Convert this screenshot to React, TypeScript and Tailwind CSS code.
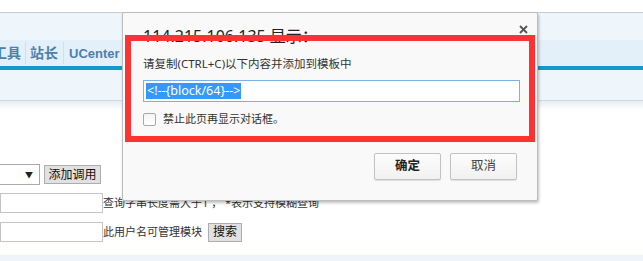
import React from "react";

const cjk = { fontFamily: '"Noto Sans", "Noto Sans CJK SC", sans-serif' };

export default function App() {
  return (
    <div className="relative w-[643px] h-[261px] overflow-hidden bg-white" style={cjk}>
      {/* page background */}
      <div className="h-[12px] bg-white" />
      <div className="h-[28px] border-t border-[#c9cdd1] bg-[#eef5fb]" />
      <div className="h-[26px] bg-[#e3eff9] flex items-center text-[14px] font-bold text-[#4d80ad] leading-none">
        <span className="ml-[-7px]">工具</span>
        <span className="mx-[4px] w-px h-[22px] bg-[#cfdfee]" />
        <span>站长</span>
        <span className="mx-[5px] w-px h-[22px] bg-[#cfdfee]" />
        <span className="text-[13px]" style={{ fontFamily: '"Liberation Sans", sans-serif' }}>UCenter</span>
      </div>
      <div className="h-[4px] bg-[#1398cc]" />
      <div className="h-[31px] bg-[#eef5fb] border-b border-[#d3d9de]" />
      <div className="h-[9px] bg-gradient-to-b from-[#e6edf3] to-white" />

      <div className="mt-[54px] flex flex-col text-[11px] text-[#333]">
        <div className="flex items-center h-[21px]">
          <div className="ml-[-60px] w-[100px] h-[21px] border border-[#a9a9a9] bg-white flex items-center justify-end pr-[6px] text-[8px] text-[#222]">
            ▼
          </div>
          <div className="ml-[4px] w-[57px] h-[19px] border border-[#adadad] bg-[#e1e1e1] flex items-center justify-center text-[12px] text-[#111]">
            添加调用
          </div>
        </div>
        <div className="flex items-center h-[20px] mt-[8px]">
          <div className="w-[103px] h-[20px] border border-[#c4c4c4] bg-white" />
          <span className="whitespace-pre">查询字串长度需大于1 ， *表示支持模糊查询</span>
        </div>
        <div className="flex items-center h-[20px] mt-[9px]">
          <div className="w-[103px] h-[20px] border border-[#c4c4c4] bg-white" />
          <span className="whitespace-nowrap">此用户名可管理模块</span>
          <div className="ml-[6px] w-[34px] h-[19px] border border-[#adadad] bg-[#e1e1e1] flex items-center justify-center text-[12px] text-[#111]">
            搜索
          </div>
        </div>
        <div className="mt-[13px] h-[8px] bg-[#eef4fa]" />
      </div>

      {/* dialog */}
      <div className="absolute left-[122px] top-[12px] w-[416px] h-[189px] bg-[#f9f9f9] border border-[#bdbdbd] rounded-[2px] shadow-[1px_2px_3px_rgba(0,0,0,0.25)] flex flex-col pl-[20px] pr-[20px]">
        <div className="mt-[12px] text-[16px] leading-[22px] text-[#222] whitespace-nowrap">
          114.215.106.135 显示：
        </div>
        <svg className="absolute right-[9px] top-[12px]" width="9" height="9" viewBox="0 0 9 9">
          <path d="M1 1L8 8M8 1L1 8" stroke="#555" strokeWidth="1.8" />
        </svg>
        <div className="mt-[9px] text-[11.5px] leading-[16px] text-[#333] whitespace-nowrap">
          请复制(CTRL+C)以下内容并添加到模板中
        </div>
        <div className="mt-[8px] w-[377px] h-[22px] border border-[#7db0e8] bg-white flex items-center px-[2px]">
          <span className="bg-[#3399ff] text-white text-[12.5px] leading-[16px] px-[1px]">{"<!--{block/64}-->"}</span>
        </div>
        <div className="mt-[11px] flex items-center h-[13px]">
          <div className="w-[13px] h-[13px] border border-[#a8a8a8] rounded-[2px] bg-gradient-to-b from-[#f4f4f4] to-white" />
          <span className="ml-[7px] text-[11px] text-[#333] whitespace-nowrap">禁止此页再显示对话框。</span>
        </div>
        <div className="mt-[27px] flex justify-end gap-[9px]">
          <div className="w-[67px] h-[27px] border border-[#c2c2c2] rounded-[2px] bg-gradient-to-b from-[#fcfcfc] to-[#f1f1f1] shadow-[0_1px_1px_rgba(0,0,0,0.1)] flex items-center justify-center text-[12.5px] font-bold text-[#222]">
            确定
          </div>
          <div className="w-[67px] h-[27px] border border-[#c2c2c2] rounded-[2px] bg-gradient-to-b from-[#fcfcfc] to-[#f1f1f1] shadow-[0_1px_1px_rgba(0,0,0,0.1)] flex items-center justify-center text-[12.5px] text-[#444]">
            取消
          </div>
        </div>
      </div>

      {/* red annotation box */}
      <div className="absolute left-[125px] top-[35px] w-[410px] h-[107px] border-[6px] border-[#fd3333]" />
    </div>
  );
}
